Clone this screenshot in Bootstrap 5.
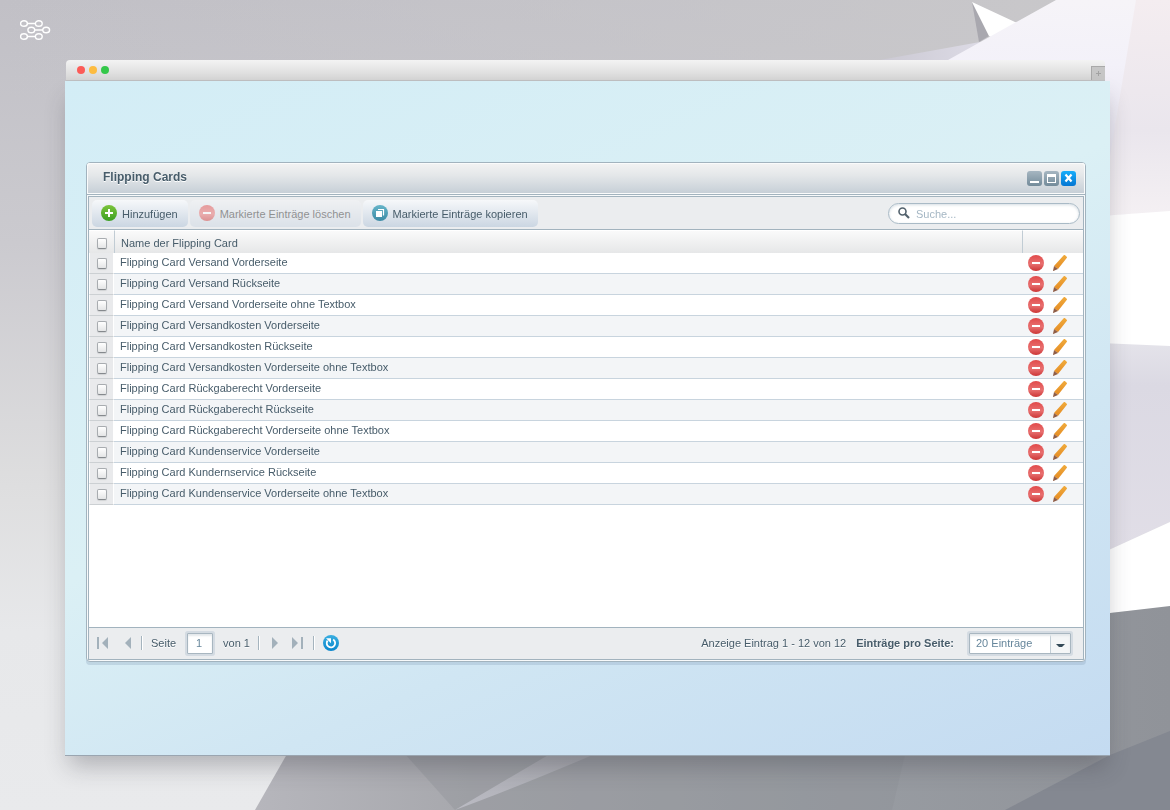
<!DOCTYPE html>
<html lang="de">
<head>
<meta charset="utf-8">
<meta name="viewport" content="width=device-width, initial-scale=1">
<title>Flipping Cards</title>
<link href="https://cdn.jsdelivr.net/npm/bootstrap@5.3.0/dist/css/bootstrap.min.css" rel="stylesheet">
<style>
  body { font: 11px/16px "Liberation Sans", Arial, sans-serif; color: #475c6a; background: #c4c3c9; }
  .backdrop { z-index: -1; width: 100%; height: 100%; }
  .topbar { height: 60px; padding: 19px 20px; }
  .browser { margin: 0 60px 55px 65px; }
  .chrome { height: 21px; margin: 0 5px 0 1px; padding-left: 11px; gap: 4px; border-radius: 4px 4px 0 0; background: linear-gradient(#f3f3f3, #d5d5d5); border-bottom: 1px solid #c0c1c3; }
  .dot { width: 8px; height: 8px; border-radius: 50%; }
  .newtab { width: 14px; height: 14px; padding: 0; border: 1px solid #a9a9a9; border-width: 1px 0 0 1px; background: #c6c6c6; }
  .newtab svg { display: block; margin: 2px; }
  .stage { padding: 81px 24px 93px 21px; background: linear-gradient(157deg, #d3edf6 0%, #dbf0f5 45%, #d0e6f3 68%, #c4dbf1 100%); box-shadow: 0 14px 22px -4px rgba(50,50,60,.3); border-bottom: 1px solid #9aa5b0; }
  .panel { border: 1px solid #a2b3be; border-radius: 4px; background: #f8fafb; box-shadow: 0 3px 0 rgba(140,165,190,.32); }
  .titlebar { height: 32px; padding: 0 9px 0 16px; border-bottom: 1px solid #a2b3be; border-radius: 3px 3px 0 0; box-shadow: inset 0 0 0 1px #fafbfb; background: linear-gradient(#f3f3f3, #e4e7e9 40%, #c5ced6); }
  .titlebar h1 { font-size: 12px; line-height: 30px; font-weight: bold; color: #475c6a; text-shadow: 0 1px 0 #fff; }
  .winbtns { gap: 2px; }
  .winbtn { width: 15px; height: 15px; padding: 0; border: 0; border-radius: 3px; background: linear-gradient(#a6b6c1, #738b9a); }
  .winbtn.close-btn { background: linear-gradient(#18aefb, #0576d2); }
  .winbtn svg { display: block; }
  .inner { margin: 1px; border: 1px solid #a2b3be; background: #fff; }
  .toolbar { height: 33px; padding: 0 3px; gap: 2px; background: #ebedef; border-bottom: 1px solid #a2b3be; }
  .tool { height: 27px; padding: 0 10px 0 9px; gap: 5px; border: 0; border-radius: 5px; font-size: 11px; line-height: 16px; color: #475c6a; background: linear-gradient(#f6f8fa, #cbd6e2); }
  .tool:disabled { opacity: .5; color: #333; border: 0; background: linear-gradient(#f4f5f7, #cbd6e2); }
  .tool .caption { padding-top: 2px; }
  .search { width: 192px; height: 21px; padding: 0 9px; gap: 6px; border: 1px solid #a9bac6; border-radius: 11px; background: #fff; box-shadow: inset 0 1px 3px #d5dde3; }
  .search input { font-size: 11px; line-height: 16px; padding: 1px 0 0; color: #475c6a; border: 0; background: none; box-shadow: none; min-height: 0; }
  .search input::placeholder { color: #a5b7c4; }
  .entries { --bs-table-striped-bg: #fff; color: #475c6a; border-collapse: separate; border-spacing: 0; table-layout: fixed; }
  .entries > * > tr > * { height: 21px; padding: 0 0 2px 6px; line-height: 16px; vertical-align: middle; border-bottom: 1px solid #c8d4de; color: #475c6a; box-shadow: none; }
  .entries > tbody > tr:nth-child(even) > * { background: #f3f5f7; }
  .entries > tbody > tr > td:first-child { background: #e9eaec; border-bottom-color: #ccd0d3; border-left: 1px solid #fff; border-right: 1px solid #fff; }
  .entries > thead > tr > th { height: 23px; padding-top: 1px; padding-bottom: 0; font-weight: normal; border: 0; border-top: 1px solid #fff; background: linear-gradient(#fafafa, #e6e7e8); }
  .entries > thead > tr > th + th { border-left: 1px solid #c1ccd4; }
  .entries > * > tr > :first-child { width: 25px; padding: 0; }
  .entries > thead > tr > :first-child { padding-top: 2px; }
  .entries > * > tr > :last-child { width: 61px; padding: 0 0 0 6px; }
  .entries .form-check-input { display: block; width: 10px; height: 11px; min-height: 0; margin: 0 0 0 7px; border: 1px solid #a8acb0; border-bottom-color: #85898d; border-radius: 2px; background: linear-gradient(#fff, #e4e5e6); box-shadow: 0 1px 1px #d0d2d4; }
  .entries thead .form-check-input { margin-left: 8px; }
  .act { display: block; width: 16px; height: 16px; padding: 0; border: 0; background: none; }
  .act svg, .pager button svg { display: block; }
  .blank { min-height: 122px; }
  .pager { height: 32px; padding: 0 12px 1px 8px; background: #ebedef; border-top: 1px solid #a2b3be; color: #475c6a; }
  .pager button { padding: 0; border: 0; background: none; }
  .pager label, .pager span { text-shadow: 0 1px 0 #fff; }
  .pager-nav { gap: 8px; }
  .pager-info { gap: 10px; }
  .rule { width: 2px; height: 14px; border-left: 1px solid #a5b4be; background: #fff; }
  .pager .pagebox { width: 26px; height: 21px; min-height: 0; margin: 0 2px 0 3px; padding: 0 8px; font-size: 11px; line-height: 16px; }
  .pager .perpage { width: 102px; height: 21px; min-height: 0; margin-left: 5px; padding: 0 22px 0 6px; font-size: 11px; line-height: 16px;
    background: url("data:image/svg+xml,%3Csvg xmlns='http://www.w3.org/2000/svg' width='20' height='19'%3E%3Cpath d='M0 0h20v19H0z' fill='%23f4f6f7'/%3E%3Cpath d='M0.5 0v19' stroke='%23c3ced6'/%3E%3Cpath d='M6 10h9l-3 3h-3z' fill='%23344a58'/%3E%3C/svg%3E") right center / 20px 19px no-repeat #fff; }
  .pager .pagebox, .pager .perpage { color: #66869b; border: 1px solid #a8b6c0; border-radius: 1px; box-shadow: 0 0 0 2px #d4dbe2, inset 0 2px 2px #e4e8eb; }
</style>
</head>
<body class="min-vh-100 d-flex flex-column">

<svg class="backdrop position-fixed top-0 start-0" viewBox="0 0 1170 810" preserveAspectRatio="none" aria-hidden="true">
  <defs>
    <linearGradient id="bgLeft" x1="0" y1="0" x2="0" y2="1"><stop offset="0" stop-color="#c1c0c6"/><stop offset=".3" stop-color="#cbcacf"/><stop offset=".6" stop-color="#dededf"/><stop offset=".78" stop-color="#e7e8ea"/><stop offset="1" stop-color="#e9eaec"/></linearGradient>
    <linearGradient id="bgTop" x1="0" y1="0" x2="1" y2="0"><stop offset="0" stop-color="#c9c8cd" stop-opacity="0"/><stop offset="1" stop-color="#c9c8ca"/></linearGradient>
    <linearGradient id="paper" x1="0" y1="0" x2="0" y2="1"><stop offset="0" stop-color="#f6f4f8"/><stop offset=".3" stop-color="#f3f1f9"/><stop offset="1" stop-color="#dfdce8"/></linearGradient>
    <linearGradient id="fold" x1="0" y1="0" x2="0" y2="1"><stop offset="0" stop-color="#f4edf0"/><stop offset=".6" stop-color="#eae6ed"/><stop offset="1" stop-color="#f4f0f3"/></linearGradient>
    <linearGradient id="lilac" x1="0" y1="0" x2="0" y2="1"><stop offset="0" stop-color="#e4e3ea"/><stop offset=".2" stop-color="#dbd9e3"/><stop offset="1" stop-color="#e1dee7"/></linearGradient>
    <linearGradient id="stone" x1="0" y1="0" x2="1" y2="0"><stop offset="0" stop-color="#b6b6bc"/><stop offset=".25" stop-color="#a6a7ac"/><stop offset=".6" stop-color="#999da3"/><stop offset="1" stop-color="#909399"/></linearGradient>
    <linearGradient id="streak" x1="0" y1="1" x2="1" y2="0"><stop offset="0" stop-color="#c2c2cb"/><stop offset="1" stop-color="#a9aab0"/></linearGradient>
    <linearGradient id="wing" x1="0" y1="0" x2="1" y2="0"><stop offset="0" stop-color="#cbc9d3"/><stop offset="1" stop-color="#e0dee9"/></linearGradient>
  </defs>
  <path fill="url(#bgLeft)" d="M0 0h1170v810H0z"/>
  <path fill="url(#bgTop)" d="M0 0h1170v100H0z"/>
  <path fill="url(#wing)" d="M880 60l100-18 20 18v30H880z"/>
  <path fill="#a9a8af" d="M972 2l7 40 10-6z"/>
  <path fill="#fff" d="M972 2l43 20 45 10-40 20-31-16z"/>
  <path fill="url(#paper)" d="M948 60L1056 0h114v216h-70V80z"/>
  <path fill="url(#fold)" d="M1136 0h34v212l-70 4 10-60z"/>
  <path fill="#fff" d="M1100 216l70-5v140h-70z"/>
  <path fill="url(#lilac)" d="M1100 343l70 3v176l-70 32z"/>
  <path fill="#fff" d="M1100 554l70-32v85l-70 7z"/>
  <path fill="url(#stone)" d="M255 810l32-56 823-141 60-7v204z"/>
  <path fill="#8d8f95" opacity=".35" d="M405 754h500l-13 56H455z"/>
  <path fill="url(#streak)" opacity=".8" d="M455 810q60-22 140-56h-45z"/>
  <path fill="#848891" d="M1005 810l105-55 60-24v79z"/>
</svg>

<svg class="position-absolute" width="0" height="0" aria-hidden="true">
  <defs>
    <linearGradient id="gGreen" x1="0" y1="0" x2="0" y2="1"><stop stop-color="#7cc43c"/><stop offset="1" stop-color="#3b9f22"/></linearGradient>
    <linearGradient id="gRed" x1="0" y1="0" x2="0" y2="1"><stop stop-color="#e14a4a"/><stop offset=".55" stop-color="#e87070"/><stop offset="1" stop-color="#cc3636"/></linearGradient>
    <linearGradient id="gTeal" x1="0" y1="0" x2="0" y2="1"><stop stop-color="#66b5c9"/><stop offset="1" stop-color="#3d8ba5"/></linearGradient>
    <linearGradient id="gBlue" x1="0" y1="0" x2="0" y2="1"><stop stop-color="#3aaee0"/><stop offset="1" stop-color="#0a86cc"/></linearGradient>
    <linearGradient id="gPen" x1="0" y1="0" x2="0" y2="1"><stop stop-color="#f0ab3c"/><stop offset="1" stop-color="#e58c25"/></linearGradient>
  </defs>
  <symbol id="minus" viewBox="0 0 16 16"><circle cx="8" cy="8" r="8" fill="url(#gRed)"/><path fill="#fff" d="M4 7h8v2H4z"/></symbol>
  <symbol id="pen" viewBox="0 0 16 16"><path fill="url(#gPen)" d="M11.700.3q.7-.7 1.400 0l1.600 1.400q.6.7 0 1.400L6 14 2 11z"/><path fill="#8f5d46" d="M2 11l4 3-4.700 2H1z"/></symbol>
</svg>

<header class="topbar">
  <svg class="d-block" width="31" height="22" fill="none" stroke="#fff" stroke-width="1.400" role="img" aria-label="Menü">
    <ellipse cx="4" cy="4.500" rx="3.400" ry="2.800"/><ellipse cx="18.800" cy="4.500" rx="3.400" ry="2.800"/><path d="M7.500 4.500h8M15 11h8M7.500 17.500h8"/><ellipse cx="11.300" cy="11" rx="3.400" ry="2.800"/><ellipse cx="26.200" cy="11" rx="3.400" ry="2.800"/><ellipse cx="4" cy="17.500" rx="3.400" ry="2.800"/><ellipse cx="18.800" cy="17.500" rx="3.400" ry="2.800"/>
  </svg>
</header>

<main class="browser flex-grow-1 d-flex flex-column">
  <div class="chrome d-flex align-items-center">
    <span class="dot" style="background:#fc5b57"></span><span class="dot" style="background:#fdbc40"></span><span class="dot" style="background:#34c84a"></span>
    <button class="newtab ms-auto align-self-end" type="button" aria-label="Neuer Tab"><svg width="9" height="9" stroke="#a2a2a2" stroke-width="1"><path d="M2 4.500h5M4.500 2v5"/></svg></button>
  </div>
  <div class="stage flex-grow-1 d-flex flex-column">
    <section class="panel flex-grow-1 d-flex flex-column">
      <div class="titlebar d-flex align-items-center">
        <h1 class="mb-0 me-auto pb-1">Flipping Cards</h1>
        <div class="winbtns d-flex">
          <button class="winbtn" type="button" aria-label="Minimieren"><svg width="15" height="15"><path fill="#fff" d="M3 10h9v2H3z"/></svg></button>
          <button class="winbtn" type="button" aria-label="Maximieren"><svg width="15" height="15"><path fill="#fff" fill-rule="evenodd" d="M3 3h9v9H3zM4 6v5h7V6z"/></svg></button>
          <button class="winbtn close-btn" type="button" aria-label="Schließen"><svg width="15" height="15" stroke="#fff" stroke-width="2.200"><path d="M4.500 3.500l6 7M10.500 3.500l-6 7"/></svg></button>
        </div>
      </div>
      <div class="inner flex-grow-1 d-flex flex-column">
        <div class="toolbar d-flex align-items-center">
          <button class="tool d-flex align-items-center" type="button"><svg width="16" height="16"><circle cx="8" cy="8" r="8" fill="url(#gGreen)"/><path fill="#fff" d="M7 4h2v3h3v2H9v3H7V9H4V7h3z"/></svg><span class="caption">Hinzufügen</span></button>
          <button class="tool d-flex align-items-center" type="button" disabled><svg width="16" height="16"><use href="#minus"/></svg><span class="caption">Markierte Einträge löschen</span></button>
          <button class="tool d-flex align-items-center" type="button"><svg width="16" height="16"><circle cx="8" cy="8" r="8" fill="url(#gTeal)"/><path fill="#fff" d="M4 6h6v6H4z"/><path fill="none" stroke="#fff" stroke-width="1.200" d="M6 4.500h5.500v6"/></svg><span class="caption">Markierte Einträge kopieren</span></button>
          <div class="search d-flex align-items-center ms-auto">
            <svg class="flex-shrink-0" width="12" height="12" fill="none" stroke="#52616c"><circle cx="4.500" cy="4.500" r="3.500" stroke-width="1.600"/><path d="M7 7l4 4" stroke-width="2.200"/></svg>
            <input class="form-control" type="text" placeholder="Suche..." aria-label="Suche">
          </div>
        </div>
        <table class="table entries mb-0">
          <thead><tr><th><input class="form-check-input" type="checkbox" aria-label="Alle markieren"></th><th scope="col">Name der Flipping Card</th><th aria-label="Aktionen"></th></tr></thead>
          <tbody id="rows"></tbody>
        </table>
        <div class="blank flex-grow-1"></div>
        <div class="pager d-flex align-items-center justify-content-between">
          <div class="pager-nav d-flex align-items-center">
            <button type="button" aria-label="Erste Seite"><svg width="12" height="12" fill="#a3b1bb"><path d="M0 0h2v12H0zM11 0v12L5 6z"/></svg></button>
            <button class="ms-2" type="button" aria-label="Vorige Seite"><svg width="8" height="12" fill="#a3b1bb"><path d="M6 0v12L0 6z"/></svg></button>
            <i class="rule"></i>
            <label for="page">Seite</label>
            <input id="page" class="form-control pagebox" type="text" value="1">
            <span>von 1</span>
            <i class="rule"></i>
            <button class="ms-1" type="button" aria-label="Nächste Seite"><svg width="7" height="12" fill="#a3b1bb"><path d="M0 0l6 6-6 6z"/></svg></button>
            <button class="ms-1" type="button" aria-label="Letzte Seite"><svg width="14" height="12" fill="#a3b1bb"><path d="M1 0l6 6-6 6zM10 0h2v12h-2z"/></svg></button>
            <i class="rule"></i>
            <button type="button" aria-label="Aktualisieren"><svg width="16" height="16"><circle cx="8" cy="8" r="8" fill="url(#gBlue)"/><path d="M10.200 4.600A4.200 4.200 0 1 1 4.600 5.600" fill="none" stroke="#fff" stroke-width="1.800"/><path fill="#fff" d="M3 3.300h5v5z"/></svg></button>
          </div>
          <div class="pager-info d-flex align-items-center">
            <span>Anzeige Eintrag 1 - 12 von 12</span>
            <label class="fw-bold" for="per">Einträge pro Seite:</label>
            <select id="per" class="form-select perpage"><option>20 Einträge</option></select>
          </div>
        </div>
      </div>
    </section>
  </div>
</main>

<script src="https://cdn.jsdelivr.net/npm/bootstrap@5.3.0/dist/js/bootstrap.bundle.min.js"></script>
<script>
  const names = [
    "Versand Vorderseite", "Versand Rückseite", "Versand Vorderseite ohne Textbox",
    "Versandkosten Vorderseite", "Versandkosten Rückseite", "Versandkosten Vorderseite ohne Textbox",
    "Rückgaberecht Vorderseite", "Rückgaberecht Rückseite", "Rückgaberecht Vorderseite ohne Textbox",
    "Kundenservice Vorderseite", "Kundernservice Rückseite", "Kundenservice Vorderseite ohne Textbox"
  ];
  document.getElementById("rows").innerHTML = names.map((n, i) => `<tr>
    <td><input class="form-check-input" type="checkbox" id="c${i}"></td>
    <td><label for="c${i}">Flipping Card ${n}</label></td>
    <td><div class="d-flex gap-2">
      <button class="act" type="button" aria-label="Löschen"><svg width="16" height="16"><use href="#minus"/></svg></button>
      <button class="act" type="button" aria-label="Bearbeiten"><svg width="16" height="16"><use href="#pen"/></svg></button>
    </div></td></tr>`).join("");
</script>
</body>
</html>
